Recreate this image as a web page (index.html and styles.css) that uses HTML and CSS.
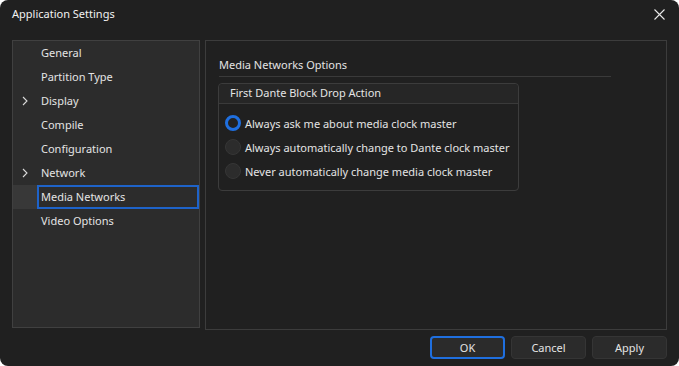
FILE: index.html
```html
<!DOCTYPE html>
<html lang="en">
<head>
    <meta charset="UTF-8">
    <title>Application Settings</title>
    <link rel="stylesheet" href="styles.css">
</head>
<body>
    <div class="window">
        <div class="titlebar">
            <span class="title">Application Settings</span>
            <span class="close">
                <svg width="11" height="11" viewBox="0 0 11 11"><path d="M0.5 0.5 L10.5 10.5 M10.5 0.5 L0.5 10.5" stroke="#e8e8e8" stroke-width="1.1" fill="none"/></svg>
            </span>
        </div>

        <div class="content">
            <div class="nav">
                <div class="nav-item">General</div>
                <div class="nav-item">Partition Type</div>
                <div class="nav-item">
                    <svg class="chevron" width="6" height="10" viewBox="0 0 6 10"><path d="M1 1 L5 5 L1 9" stroke="#d8d8d8" stroke-width="1.1" fill="none"/></svg>
                    Display
                </div>
                <div class="nav-item">Compile</div>
                <div class="nav-item">Configuration</div>
                <div class="nav-item">
                    <svg class="chevron" width="6" height="10" viewBox="0 0 6 10"><path d="M1 1 L5 5 L1 9" stroke="#d8d8d8" stroke-width="1.1" fill="none"/></svg>
                    Network
                </div>
                <div class="nav-item selected"><span class="sel-box">Media Networks</span></div>
                <div class="nav-item">Video Options</div>
            </div>

            <div class="page">
                <div class="section-title">Media Networks Options</div>
                <div class="group">
                    <div class="group-header">First Dante Block Drop Action</div>
                    <div class="group-body">
                        <div class="radio-row"><span class="radio checked"></span>Always ask me about media clock master</div>
                        <div class="radio-row"><span class="radio"></span>Always automatically change to Dante clock master</div>
                        <div class="radio-row"><span class="radio"></span>Never automatically change media clock master</div>
                    </div>
                </div>
            </div>
        </div>

        <div class="buttons">
            <button class="btn default">OK</button>
            <button class="btn">Cancel</button>
            <button class="btn">Apply</button>
        </div>
    </div>
</body>
</html>
```

FILE: styles.css
```css
body {
    margin: 0;
    background: #ffffff;
    font-family: "Noto Sans", "Open Sans", sans-serif;
    font-size: 11px;
    color: #e4e4e4;
}
.window {
    width: 679px;
    height: 366px;
    background: #202020;
    border-radius: 8px;
    overflow: hidden;
    display: flex;
    flex-direction: column;
    white-space: nowrap;
}
.titlebar {
    height: 30px;
    display: flex;
    align-items: center;
    justify-content: space-between;
    padding: 0 14px 0 12px;
}
.title {
    color: #f2f2f2;
    margin-top: -3px;
}
.close {
    display: flex;
    margin-top: -2px;
}
.content {
    display: flex;
    gap: 5px;
    padding: 10px 12px 0 12px;
    height: 290px;
}
.nav {
    width: 186px;
    height: 286px;
    background: #2c2c2c;
    border: 1px solid #404040;
}
.nav-item {
    height: 24px;
    box-sizing: border-box;
    padding-bottom: 2px;
    display: flex;
    align-items: center;
    padding-left: 28px;
    position: relative;
}
.chevron {
    position: absolute;
    left: 9px;
    top: 7px;
}
.nav-item.selected {
    background: #383838;
    padding-left: 24px;
    padding-bottom: 0;
}
.sel-box {
    flex: 1;
    height: 100%;
    box-sizing: border-box;
    border: 2px solid #1e63c9;
    background: #2c2c2c;
    display: flex;
    align-items: center;
    padding: 0 0 2px 2px;
}
.page {
    flex: 1;
    height: 288px;
    border: 1px solid #3c3c3c;
    padding: 0 55px 0 13px;
}
.section-title {
    margin-top: 16px;
    padding-bottom: 3px;
    border-bottom: 1px solid #3a3a3a;
    line-height: 16px;
}
.group {
    margin-top: 6px;
    width: 299px;
    border: 1px solid #3c3c3c;
    border-radius: 4px;
    margin-left: -1px;
}
.group-header {
    height: 19px;
    line-height: 18px;
    padding-left: 11px;
    background: #262626;
    border-bottom: 1px solid #3a3a3a;
    border-radius: 4px 4px 0 0;
}
.group-body {
    padding: 7px 6px 7px 6px;
}
.radio-row {
    height: 24px;
    display: flex;
    align-items: center;
    gap: 4px;
}
.radio {
    width: 16px;
    height: 16px;
    box-sizing: border-box;
    border-radius: 50%;
    background: #2c2c2c;
    border: 1px solid #363636;
}
.radio.checked {
    background: #222222;
    border: 3px solid #1f6fdf;
}
.buttons {
    display: flex;
    justify-content: flex-end;
    gap: 6px;
    padding: 6px 12px 0 0;
}
.btn {
    width: 75px;
    height: 23px;
    font-family: "Noto Sans", "Open Sans", sans-serif;
    font-size: 11px;
    color: #e4e4e4;
    background: #2b2b2b;
    border: 1px solid #353535;
    border-radius: 4px;
    padding: 0;
}
.btn.default {
    border: 2px solid #1f6fdf;
}
```
